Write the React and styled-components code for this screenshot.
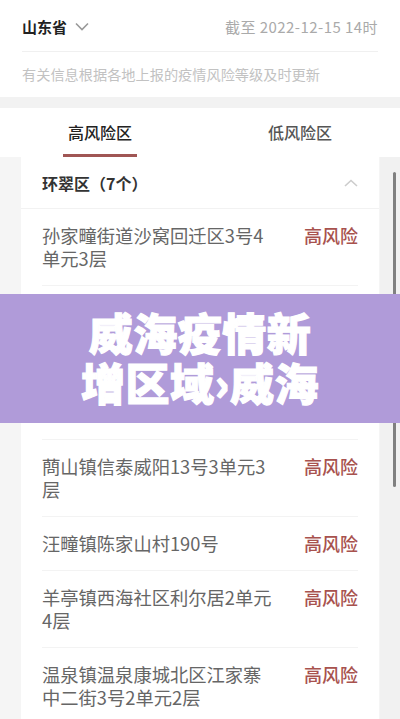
import React from "react";
import styled, { createGlobalStyle } from "styled-components";

const Global = createGlobalStyle`
  html, body { margin: 0; padding: 0; background: #f5f5f5; }
  body { font-family: "Noto Sans CJK SC", "Noto Sans", sans-serif; }
  * { box-sizing: border-box; }
`;

const Page = styled.div`
  position: relative;
  width: 400px;
  height: 719px;
  overflow: hidden;
  background: #f5f5f5;
`;

const Header = styled.header`
  background: #fff;
  padding: 0 22px;
  height: 97px;
  display: flex;
  flex-direction: column;
`;

const TopRow = styled.div`
  height: 52px;
  display: flex;
  align-items: center;
  justify-content: space-between;
  border-bottom: 1px solid #f0f0f0;
  padding-top: 1px;
`;

const Province = styled.div`
  display: flex;
  align-items: center;
  gap: 8px;
  font-size: 15px;
  font-weight: 700;
  color: #222;
`;

const DateText = styled.div`
  font-size: 15px;
  color: #aaa;
  letter-spacing: 0.45px;
`;

const Note = styled.div`
  flex: 1;
  display: flex;
  align-items: center;
  font-size: 14.2px;
  color: #c2c2c2;
  padding-bottom: 2px;
`;

const Gap = styled.div`
  height: 11px;
  background: #f2f2f2;
`;

const Tabs = styled.nav`
  background: #fff;
  height: 49px;
  display: grid;
  grid-template-columns: 1fr 1fr;
`;

const Tab = styled.div`
  position: relative;
  display: flex;
  align-items: center;
  justify-content: center;
  font-size: 16px;
  font-weight: 500;
  color: ${(p) => (p.$active ? "#222" : "#555")};
  padding-bottom: 2px;
  &::after {
    content: "";
    display: ${(p) => (p.$active ? "block" : "none")};
    position: absolute;
    bottom: 0;
    left: 50%;
    transform: translateX(-50%);
    width: 74px;
    height: 3px;
    background: #a05654;
  }
`;

const Body = styled.div`
  padding: 0 21px;
`;

const Card = styled.section`
  background: #fff;
`;

const CardHead = styled.div`
  height: 52px;
  display: flex;
  align-items: center;
  justify-content: space-between;
  padding: 0 21px;
  border-bottom: 1px solid #f2f2f2;
  font-size: 16px;
  font-weight: 700;
  color: #333;
`;

const List = styled.ul`
  list-style: none;
  margin: 0;
  padding: 0 21px;
`;

const Row = styled.li`
  display: flex;
  justify-content: space-between;
  align-items: flex-start;
  padding: 15px 0;
  border-bottom: 1px solid #f3f3f3;
`;

const Address = styled.div`
  width: 236px;
  font-size: 18.3px;
  line-height: 23px;
  color: #666;
  word-break: break-all;
`;

const Risk = styled.div`
  font-size: 18px;
  line-height: 23px;
  font-weight: 500;
  color: #a8524e;
`;

const Banner = styled.div`
  position: absolute;
  left: 0;
  right: 0;
  top: 294px;
  height: 129px;
  background: #b09bd9;
  display: flex;
  flex-direction: column;
  align-items: center;
  justify-content: center;
  color: #fff;
  font-size: 44px;
  font-weight: 900;
  line-height: 50px;
  letter-spacing: 0.5px;
  -webkit-text-stroke: 1.2px #fff;
  padding-bottom: 4px;
`;

const BannerLine = styled.div`
  height: 50px;
`;

const Scrollbar = styled.div`
  position: absolute;
  left: 393px;
  top: 172px;
  width: 3px;
  height: 315px;
  background: #808080;
  border-radius: 2px;
`;

const Track = styled.div`
  position: absolute;
  left: 380px;
  top: 157px;
  width: 20px;
  bottom: 0;
  background: #f1f1f1;
`;

const items = [
  "孙家疃街道沙窝回迁区3号4单元3层",
  "孙家疃街道杨家埠村委会7号楼2单元",
  "竹岛街道海悦公寓小区6号楼3单元",
  "蔄山镇信泰威阳13号3单元3层",
  "汪疃镇陈家山村190号",
  "羊亭镇西海社区利尔居2单元4层",
  "温泉镇温泉康城北区江家寨中二街3号2单元2层",
];

export default function App() {
  return (
    <Page>
      <Global />
      <Header>
        <TopRow>
          <Province>
            山东省
            <svg width="14" height="9" viewBox="0 0 14 9" fill="none">
              <path d="M1 1.5 L7 7.5 L13 1.5" stroke="#999" strokeWidth="1.6" />
            </svg>
          </Province>
          <DateText>截至 2022-12-15 14时</DateText>
        </TopRow>
        <Note>有关信息根据各地上报的疫情风险等级及时更新</Note>
      </Header>
      <Gap />
      <Tabs>
        <Tab $active>高风险区</Tab>
        <Tab>低风险区</Tab>
      </Tabs>
      <Track />
      <Body>
        <Card>
          <CardHead>
            环翠区（7个）
            <svg width="14" height="8" viewBox="0 0 14 8" fill="none">
              <path d="M1 7 L7 1.5 L13 7" stroke="#ccc" strokeWidth="1.6" />
            </svg>
          </CardHead>
          <List>
            {items.map((t) => (
              <Row key={t}>
                <Address>{t}</Address>
                <Risk>高风险</Risk>
              </Row>
            ))}
          </List>
        </Card>
      </Body>
      <Scrollbar />
      <Banner>
        <BannerLine>威海疫情新</BannerLine>
        <BannerLine>增区域›威海</BannerLine>
      </Banner>
    </Page>
  );
}
